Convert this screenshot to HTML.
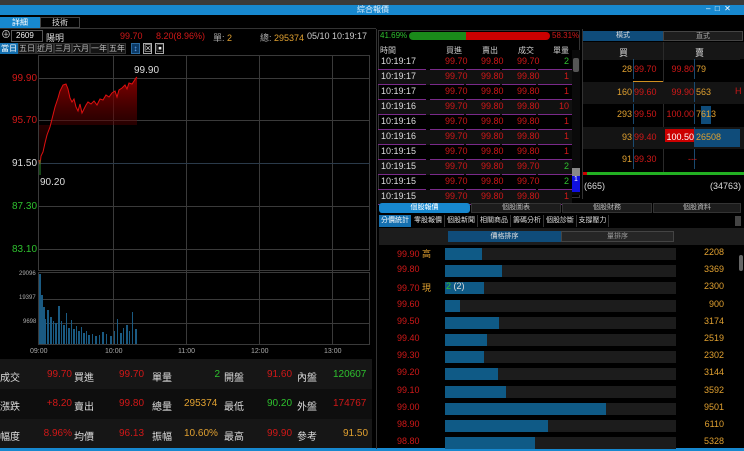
<!DOCTYPE html>
<html><head><meta charset="utf-8"><style>
*{margin:0;padding:0;box-sizing:border-box}
body{width:744px;height:451px;background:#000;overflow:hidden;position:relative;font-family:"Liberation Sans","Noto Sans CJK TC",sans-serif;font-size:9px;color:#ccc}
.a{position:absolute;white-space:nowrap}
.r{color:#d01818}.g{color:#2ec02e}.y{color:#e0a030}.w{color:#ddd}
.tb{position:absolute;height:11px;border:1px solid #333;background:#141414;color:#bbb;text-align:center;line-height:9px;font-size:8px}
.row{position:absolute;left:378px;width:194px;height:15px}
.row span{position:absolute;top:1px}
.row i{position:absolute;bottom:0;height:1px;background:#7a2a8a}
.bt{position:absolute;font-size:10px}
</style></head><body>
<div class="a" style="left:0;top:0;width:744px;height:5px;background:#3a3a3a"></div>
<div class="a" style="left:0;top:5px;width:744px;height:10px;background:#1788cf"></div>
<div class="a" style="left:357px;top:5px;font-size:8px;color:#e8f4ff;line-height:10px">綜合報價</div>
<div class="a" style="left:706px;top:4px;font-size:8px;color:#fff;line-height:10px">–&nbsp;&nbsp;□&nbsp;&nbsp;✕</div>
<div class="a" style="left:0;top:17px;width:40px;height:11px;background:#1788cf;color:#fff;text-align:center;font-size:8px;line-height:11px">詳細</div>
<div class="a" style="left:40px;top:17px;width:40px;height:11px;border:1px solid #444;color:#ddd;text-align:center;font-size:8px;line-height:10px">技術</div>
<div class="a" style="left:0;top:28px;width:376px;height:1px;background:#333"></div>
<div class="a" style="left:1px;top:30px;font-size:10px;color:#ccc;line-height:11px">⊕</div>
<div class="a" style="left:11px;top:30px;width:32px;height:12px;border:1px solid #555;background:#000;color:#eee;font-size:8px;line-height:10px;padding-left:4px">2609</div>
<div class="a w" style="left:46px;top:31px;font-size:9px">陽明</div>
<div class="a r" style="left:120px;top:31px">99.70</div>
<div class="a r" style="left:156px;top:31px">8.20(8.96%)</div>
<div class="a" style="left:213px;top:31px;color:#aaa">單: <span class="y">2</span></div>
<div class="a" style="left:260px;top:31px;color:#aaa">總: <span class="y">295374</span></div>
<div class="a" style="left:307px;top:31px;color:#ccc">05/10 10:19:17</div>
<div class="tb" style="left:0;top:43px;width:18px;background:#1470b0;color:#fff;border-color:#1470b0">當日</div>
<div class="tb" style="left:18px;top:43px;width:18px">五日</div>
<div class="tb" style="left:36px;top:43px;width:18px">近月</div>
<div class="tb" style="left:54px;top:43px;width:18px">三月</div>
<div class="tb" style="left:72px;top:43px;width:18px">六月</div>
<div class="tb" style="left:90px;top:43px;width:18px">一年</div>
<div class="tb" style="left:108px;top:43px;width:18px">五年</div>
<div class="tb" style="left:131px;top:43px;width:9px;background:#0b3a66;color:#6af;border-color:#2a6aa0">↕</div>
<div class="tb" style="left:143px;top:43px;width:9px;background:#000;color:#eee;border-color:#aaa">⊠</div>
<div class="tb" style="left:155px;top:43px;width:9px;background:#000;color:#eee;border-color:#aaa">▣</div>
<svg class="a" style="left:0;top:55px" width="376" height="303">
<defs><linearGradient id="gr" x1="0" y1="0" x2="0" y2="1"><stop offset="0" stop-color="#8a0000" stop-opacity=".95"/><stop offset="1" stop-color="#300000" stop-opacity="0"/></linearGradient></defs>
<g stroke="#3a3a3a" stroke-width="1" fill="none">
<rect x="38.5" y="0.5" width="331" height="215"/>
<rect x="38.5" y="217.5" width="331" height="72"/>
<line x1="113.5" y1="0" x2="113.5" y2="290"/><line x1="186.5" y1="0" x2="186.5" y2="290"/><line x1="259.5" y1="0" x2="259.5" y2="290"/><line x1="332.5" y1="0" x2="332.5" y2="290"/>
<line x1="38" y1="23.5" x2="370" y2="23.5"/><line x1="38" y1="65.5" x2="370" y2="65.5"/><line x1="38" y1="108.5" x2="370" y2="108.5" stroke="#2a3a4a"/><line x1="38" y1="151.5" x2="370" y2="151.5"/><line x1="38" y1="194.5" x2="370" y2="194.5"/>
<line x1="38" y1="244.5" x2="370" y2="244.5"/><line x1="38" y1="268.5" x2="370" y2="268.5"/>
</g>
<path d="M39,105 L40,110 L41,101 L43,97 L45,88 L47,80 L50,72 L53,60 L55,52 L58,43 L60,36 L63,30 L66,29 L68,34 L70,43 L72,47 L74,44 L76,52 L78,56 L80,49 L82,58 L84,54 L86,50 L88,47 L91,49 L94,46 L97,50 L100,44 L103,45 L106,40 L109,42 L112,38 L115,36 L117,42 L119,35 L122,33 L125,30 L127,34 L129,28 L132,29 L134,26 L136,23 L137,22 L137,70 L39,70 Z" fill="url(#gr)"/>
<path d="M39,105 L40,110 L41,101 L43,97 L45,88 L47,80 L50,72 L53,60 L55,52 L58,43 L60,36 L63,30 L66,29 L68,34 L70,43 L72,47 L74,44 L76,52 L78,56 L80,49 L82,58 L84,54 L86,50 L88,47 L91,49 L94,46 L97,50 L100,44 L103,45 L106,40 L109,42 L112,38 L115,36 L117,42 L119,35 L122,33 L125,30 L127,34 L129,28 L132,29 L134,26 L136,23 L137,22" fill="none" stroke="#e01010" stroke-width="1"/>
<line x1="40" y1="105" x2="40" y2="120" stroke="#2a8a2a"/>
<g fill="#1a5a82">
<rect x="39" y="219" width="2" height="70"/><rect x="41" y="240" width="2" height="49"/><rect x="43" y="252" width="2" height="37"/><rect x="45" y="264" width="1" height="25"/><rect x="47" y="255" width="2" height="34"/><rect x="50" y="262" width="2" height="27"/><rect x="53" y="266" width="1" height="23"/><rect x="55" y="268" width="2" height="21"/><rect x="58" y="251" width="2" height="38"/><rect x="61" y="266" width="1" height="23"/><rect x="63" y="270" width="2" height="19"/><rect x="66" y="258" width="1" height="31"/><rect x="68" y="273" width="2" height="16"/><rect x="71" y="265" width="1" height="24"/><rect x="73" y="274" width="2" height="15"/><rect x="76" y="271" width="1" height="18"/><rect x="78" y="276" width="2" height="13"/><rect x="81" y="272" width="1" height="17"/><rect x="83" y="278" width="2" height="11"/><rect x="86" y="276" width="1" height="13"/><rect x="88" y="280" width="2" height="9"/><rect x="92" y="279" width="1" height="10"/><rect x="95" y="281" width="2" height="8"/><rect x="99" y="280" width="1" height="9"/><rect x="102" y="277" width="2" height="12"/><rect x="106" y="279" width="1" height="10"/><rect x="110" y="281" width="2" height="8"/><rect x="114" y="276" width="1" height="13"/><rect x="117" y="264" width="1" height="25"/><rect x="120" y="278" width="2" height="11"/><rect x="123" y="273" width="1" height="16"/><rect x="126" y="270" width="2" height="19"/><rect x="129" y="276" width="1" height="13"/><rect x="132" y="257" width="1" height="32"/><rect x="135" y="274" width="2" height="15"/>
</g>
</svg>
<div class="a" style="left:134px;top:65px;color:#ddd;font-size:10px">99.90</div>
<div class="a r" style="left:12px;top:73px;font-size:10px">99.90</div>
<div class="a r" style="left:12px;top:115px;font-size:10px">95.70</div>
<div class="a w" style="left:12px;top:158px;font-size:10px">91.50</div>
<div class="a w" style="left:40px;top:177px;font-size:10px">90.20</div>
<div class="a g" style="left:12px;top:201px;font-size:10px">87.30</div>
<div class="a g" style="left:12px;top:244px;font-size:10px">83.10</div>
<div class="a" style="left:19px;top:271px;font-size:6px;color:#aaa">29096</div>
<div class="a" style="left:19px;top:295px;font-size:6px;color:#aaa">19397</div>
<div class="a" style="left:23px;top:319px;font-size:6px;color:#aaa">9698</div>
<div class="a" style="left:30px;top:348px;font-size:7px;color:#aaa">09:00</div>
<div class="a" style="left:105px;top:348px;font-size:7px;color:#aaa">10:00</div>
<div class="a" style="left:178px;top:348px;font-size:7px;color:#aaa">11:00</div>
<div class="a" style="left:251px;top:348px;font-size:7px;color:#aaa">12:00</div>
<div class="a" style="left:324px;top:348px;font-size:7px;color:#aaa">13:00</div>
<div class="a" style="left:0;top:359px;width:372px;height:30px;background:#161616"></div>
<div class="a" style="left:0;top:389px;width:372px;height:30px;background:#0e0e0e"></div>
<div class="a" style="left:0;top:419px;width:372px;height:30px;background:#161616"></div>
<div class="a" style="left:0;top:448px;width:744px;height:3px;background:#1788cf"></div>
<div class="bt w" style="left:0;top:369px">成交</div><div class="bt r" style="left:40px;top:369px;width:32px;text-align:right">99.70</div><div class="bt w" style="left:74px;top:369px">買進</div><div class="bt r" style="left:119px;top:369px">99.70</div><div class="bt w" style="left:152px;top:369px">單量</div><div class="bt g" style="left:190px;top:369px;width:30px;text-align:right">2</div><div class="bt w" style="left:224px;top:369px">開盤</div><div class="bt r" style="left:267px;top:369px">91.60</div><div class="bt w" style="left:297px;top:369px">內盤</div><div class="bt g" style="left:333px;top:369px">120607</div>
<div class="bt w" style="left:0;top:398px">漲跌</div><div class="bt r" style="left:40px;top:398px;width:32px;text-align:right">+8.20</div><div class="bt w" style="left:74px;top:398px">賣出</div><div class="bt r" style="left:119px;top:398px">99.80</div><div class="bt w" style="left:152px;top:398px">總量</div><div class="bt y" style="left:184px;top:398px">295374</div><div class="bt w" style="left:224px;top:398px">最低</div><div class="bt g" style="left:267px;top:398px">90.20</div><div class="bt w" style="left:297px;top:398px">外盤</div><div class="bt r" style="left:333px;top:398px">174767</div>
<div class="bt w" style="left:0;top:428px">幅度</div><div class="bt r" style="left:40px;top:428px;width:32px;text-align:right">8.96%</div><div class="bt w" style="left:74px;top:428px">均價</div><div class="bt r" style="left:119px;top:428px">96.13</div><div class="bt w" style="left:152px;top:428px">振幅</div><div class="bt y" style="left:184px;top:428px">10.60%</div><div class="bt w" style="left:224px;top:428px">最高</div><div class="bt r" style="left:267px;top:428px">99.90</div><div class="bt w" style="left:297px;top:428px">參考</div><div class="bt y" style="left:343px;top:428px">91.50</div>
<div class="a" style="left:376px;top:29px;width:1px;height:420px;background:#333"></div>
<div class="a" style="left:378px;top:30px;width:202px;height:168px;border:1px solid #333"></div>
<div class="a g" style="left:380px;top:31px;font-size:8px">41.69%</div>
<div class="a" style="left:409px;top:32px;width:57px;height:8px;background:#1a8a1a;border-radius:4px 0 0 4px"></div>
<div class="a" style="left:466px;top:32px;width:84px;height:8px;background:#c00;border-radius:0 4px 4px 0"></div>
<div class="a r" style="left:552px;top:31px;font-size:8px">58.31%</div>
<div class="a" style="left:380px;top:45px;font-size:8px;color:#ccc">時間</div>
<div class="a" style="left:446px;top:45px;font-size:8px;color:#ccc">買進</div>
<div class="a" style="left:482px;top:45px;font-size:8px;color:#ccc">賣出</div>
<div class="a" style="left:518px;top:45px;font-size:8px;color:#ccc">成交</div>
<div class="a" style="left:553px;top:45px;font-size:8px;color:#ccc">單量</div>
<div id="ticks"></div>
<div class="a" style="left:572px;top:50px;width:8px;height:145px;background:#0a0a0a"></div>
<div class="a" style="left:573px;top:58px;width:6px;height:14px;background:#555;border-radius:2px"></div>
<div class="a" style="left:572px;top:168px;width:8px;height:8px;background:#888"></div>
<div class="a" style="left:572px;top:176px;width:8px;height:16px;background:#1010e0;color:#fff;font-size:7px;text-align:center">1</div>
<div class="a" style="left:582px;top:29px;width:1px;height:170px;background:#333"></div>
<div class="a" style="left:583px;top:31px;width:80px;height:10px;background:#0f4c7a;color:#ddd;text-align:center;font-size:7px;line-height:10px">橫式</div>
<div class="a" style="left:663px;top:31px;width:80px;height:10px;background:#1e1e1e;border:1px solid #444;color:#aaa;text-align:center;font-size:7px;line-height:9px">直式</div>
<div class="a" style="left:583px;top:42px;width:161px;height:18px;background:#161616"></div>
<div class="a" style="left:663px;top:42px;width:1px;height:130px;background:#2a2a2a"></div>
<div class="a w" style="left:619px;top:46px">買</div><div class="a w" style="left:695px;top:46px">賣</div>
<div class="a" style="left:583px;top:82px;width:161px;height:22px;background:#141414"></div>
<div class="a" style="left:583px;top:127px;width:161px;height:22px;background:#141414"></div>
<div class="a" style="left:701px;top:106px;width:10px;height:18px;background:#0f4c7a"></div>
<div class="a" style="left:695px;top:129px;width:45px;height:18px;background:#0f4c7a"></div>
<div class="a" style="left:665px;top:129px;width:30px;height:13px;background:#c00"></div>
<div class="a" style="left:633px;top:81px;width:30px;height:1px;background:#d09020"></div>
<div class="a" style="left:740px;top:59px;width:4px;height:22px;background:#000"></div>
<div id="ob"></div>
<div class="a" style="left:583px;top:172px;width:161px;height:3px;background:#22b022"></div>
<div class="a" style="left:583px;top:172px;width:4px;height:3px;background:#c00"></div>
<div class="a w" style="left:584px;top:181px;font-size:9px">(665)</div>
<div class="a w" style="left:710px;top:181px;font-size:9px">(34763)</div>
<div class="a" style="left:379px;top:203px;width:91px;height:10px;background:#1788cf;border-radius:3px;color:#fff;font-size:7px;text-align:center;line-height:10px">個股報價</div>
<div class="a" style="left:471px;top:203px;width:90px;height:10px;background:#1c1c1c;border:1px solid #333;color:#bbb;font-size:7px;text-align:center;line-height:8px">個股圖表</div>
<div class="a" style="left:562px;top:203px;width:90px;height:10px;background:#1c1c1c;border:1px solid #333;color:#bbb;font-size:7px;text-align:center;line-height:8px">個股財務</div>
<div class="a" style="left:653px;top:203px;width:88px;height:10px;background:#1c1c1c;border:1px solid #333;color:#bbb;font-size:7px;text-align:center;line-height:8px">個股資料</div>
<div class="a" style="left:379px;top:215px;width:32px;height:12px;background:#1470b0;color:#fff;font-size:7px;text-align:center;line-height:12px">分價統計</div>
<div class="a" style="left:412px;top:215px;width:197px;height:12px;font-size:7px;line-height:12px;color:#ddd"><span style="display:inline-block;width:33px;text-align:center;border-right:1px solid #333">零股報價</span><span style="display:inline-block;width:33px;text-align:center;border-right:1px solid #333">個股新聞</span><span style="display:inline-block;width:33px;text-align:center;border-right:1px solid #333">相關商品</span><span style="display:inline-block;width:33px;text-align:center;border-right:1px solid #333">籌碼分析</span><span style="display:inline-block;width:33px;text-align:center;border-right:1px solid #333">個股診斷</span><span style="display:inline-block;width:32px;text-align:center;border-right:1px solid #333">支撐壓力</span></div>
<div class="a" style="left:735px;top:216px;width:6px;height:10px;background:#444"></div>
<div class="a" style="left:379px;top:228px;width:365px;height:17px;background:#1c1c1c"></div>
<div class="a" style="left:448px;top:231px;width:113px;height:11px;background:#0f4c7a;color:#ddd;font-size:7px;text-align:center;line-height:11px">價格排序</div>
<div class="a" style="left:561px;top:231px;width:113px;height:11px;background:#262626;border:1px solid #444;color:#999;font-size:7px;text-align:center;line-height:9px">量排序</div>
<div id="pl"></div>
<div class="a" style="left:739px;top:255px;width:4px;height:16px;background:#666;border-radius:2px"></div>
<script>
var t=[["10:19:17","99.80","99.70","2","g"],["10:19:17","99.80","99.80","1","r"],["10:19:17","99.80","99.80","1","r"],["10:19:16","99.80","99.80","10","r"],["10:19:16","99.80","99.80","1","r"],["10:19:16","99.80","99.80","1","r"],["10:19:15","99.80","99.80","1","r"],["10:19:15","99.80","99.70","2","g"],["10:19:15","99.80","99.70","2","g"],["10:19:15","99.80","99.80","1","r"]];
var h="";t.forEach(function(r,i){var y=55+i*15;h+='<div class="row" style="top:'+y+'px;'+(i%2?'background:#111':'')+'"><span class="w" style="left:3px">'+r[0]+'</span><span class="r" style="left:67px">99.70</span><span class="r" style="left:103px">'+r[1]+'</span><span class="r" style="left:139px">'+r[2]+'</span><span class="'+r[4]+'" style="right:3px">'+r[3]+'</span><i style="left:0;width:48px"></i><i style="left:52px;width:34px"></i><i style="left:88px;width:34px"></i><i style="left:124px;width:34px"></i><i style="left:160px;width:34px"></i></div>'});
document.getElementById("ticks").innerHTML=h;
var ob=[["28","99.70","99.80","79"],["160","99.60","99.90","563"],["293","99.50","100.00","7613"],["93","99.40","100.50","26508"],["91","99.30","",""]];
h="";ob.forEach(function(r,i){var y=64+i*22.5;h+='<div class="a y" style="left:600px;top:'+y+'px;width:32px;text-align:right;font-size:9px">'+r[0]+'</div><div class="a r" style="left:634px;top:'+y+'px;font-size:9px">'+r[1]+'</div><div class="a" style="left:633px;top:'+(y-5)+'px;width:1px;height:20px;background:#1a4a70"></div><div class="a" style="left:694px;top:'+(y-5)+'px;width:1px;height:20px;background:#1a4a70"></div>'+(r[2]?'<div class="a '+(i==3?'':'r')+'" style="left:664px;top:'+y+'px;width:30px;text-align:right;font-size:9px;'+(i==3?'color:#fff':'')+'">'+r[2]+'</div><div class="a y" style="left:696px;top:'+y+'px;font-size:9px">'+r[3]+'</div>':'<div class="a r" style="left:688px;top:'+y+'px;font-size:9px">---</div>')});
h+='<div class="a r" style="left:735px;top:86px;font-size:9px">H</div>';
document.getElementById("ob").innerHTML=h;
var pl=[["99.90","高",2208,482],["99.80","",3369,502],["99.70","現",2300,484],["99.60","",900,460],["99.50","",3174,499],["99.40","",2519,487],["99.30","",2302,484],["99.20","",3144,498],["99.10","",3592,506],["99.00","",9501,606],["98.90","",6110,548],["98.80","",5328,535]];
h="";pl.forEach(function(r,i){var y=247+i*17.2;h+='<div class="a r" style="left:397px;top:'+y+'px;font-size:9px">'+r[0]+(r[1]?' <span class="y">'+r[1]+'</span>':'')+'</div><div class="a" style="left:445px;top:'+(y+1)+'px;width:231px;height:12px;background:#1c1c1c"></div><div class="a" style="left:445px;top:'+(y+1)+'px;width:'+(r[3]-445)+'px;height:12px;background:#0f5a86"></div><div class="a y" style="left:680px;top:'+y+'px;width:44px;text-align:right;font-size:9px">'+r[2]+'</div>'});
h+='<div class="a" style="left:446px;top:281px;font-size:9px"><span class="g">2</span> <span class="w">(2)</span></div>';
document.getElementById("pl").innerHTML=h;
</script>
</body></html>
